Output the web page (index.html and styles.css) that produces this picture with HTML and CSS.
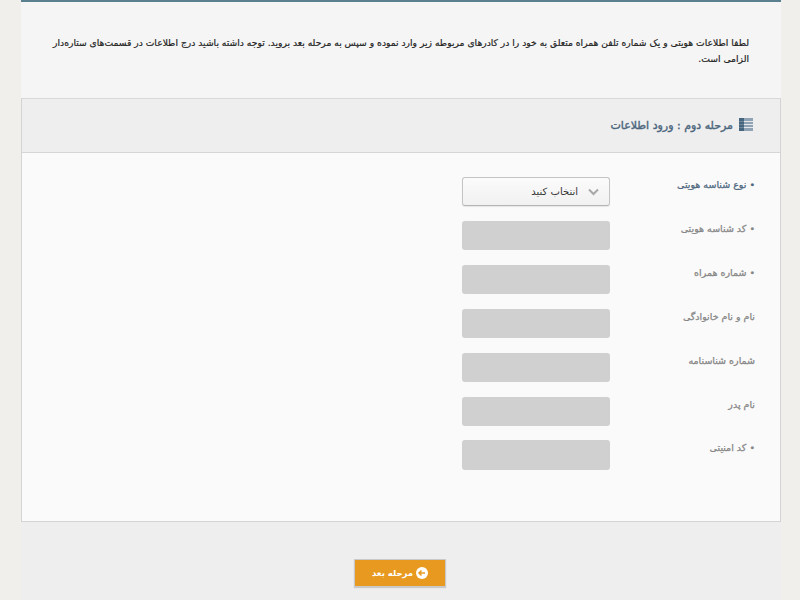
FILE: index.html
```html
<!DOCTYPE html>
<html lang="fa" dir="rtl">
<head>
<meta charset="utf-8">
<title>مرحله دوم</title>
<link rel="stylesheet" href="styles.css">
</head>
<body>
<main class="page">
  <section class="intro">
    <p>لطفا اطلاعات هویتی و یک شماره تلفن همراه متعلق به خود را در کادرهای مربوطه زیر وارد نموده و سپس به مرحله بعد بروید. توجه داشته باشید درج اطلاعات در قسمت‌های ستاره‌دار<br>الزامی است.</p>
  </section>
  <section class="panel">
    <header class="panel-head">
      <svg class="panel-icon" width="14" height="13" viewBox="0 0 14 13" aria-hidden="true">
        <rect width="14" height="13" fill="#8fa3b5"/>
        <rect width="5" height="13" fill="#46667f"/>
        <path d="M5 3.500h9M5 6.500h9M5 9.500h9" stroke="#e4e8ec" stroke-width="1"/>
        <path d="M0 3.500h5M0 6.500h5M0 9.500h5" stroke="#6f8699" stroke-width="1"/>
      </svg>
      <h2>مرحله دوم : ورود اطلاعات</h2>
    </header>
    <form class="form">
      <div class="row">
        <label class="label active">• نوع شناسه هویتی</label>
        <div class="select">
          <svg class="chev" width="11" height="8" viewBox="0 0 11 8" aria-hidden="true"><path d="M1 1.500 5.500 6 10 1.500" fill="none" stroke="#a8a8a8" stroke-width="2"/></svg>
          <span>انتخاب کنید</span>
        </div>
      </div>
      <div class="row"><label class="label">• کد شناسه هویتی</label><div class="input"></div></div>
      <div class="row"><label class="label">• شماره همراه</label><div class="input"></div></div>
      <div class="row"><label class="label">نام و نام خانوادگی</label><div class="input"></div></div>
      <div class="row"><label class="label">شماره شناسنامه</label><div class="input"></div></div>
      <div class="row"><label class="label">نام پدر</label><div class="input"></div></div>
      <div class="row captcha"><label class="label">• کد امنیتی</label><div class="input"></div></div>
    </form>
  </section>
  <footer class="foot">
    <button class="next" type="button">
      <svg width="12" height="12" viewBox="0 0 12 12" aria-hidden="true"><circle cx="6" cy="6" r="6" fill="#fff"/><path d="M9 6H3.500M5.500 3.500 3 6l2.500 2.500" fill="none" stroke="#e89a20" stroke-width="1.500"/></svg>
      <span>مرحله بعد</span>
    </button>
  </footer>
</main>
</body>
</html>
```
FILE: styles.css
```css
* { box-sizing: border-box; }
html, body { margin: 0; height: 100%; }
body {
  background: #f0efeb;
  font-family: "DejaVu Sans", "Noto Sans", sans-serif;
  overflow: hidden;
}
.page {
  width: 760px;
  height: 600px;
  margin-right: 19px;
  background: #f5f5f5;
  border-top: 2px solid #5b8090;
  display: flex;
  flex-direction: column;
}
.intro {
  height: 96px;
  padding: 33px 32px 0;
}
.intro p {
  margin: 0;
  font-size: 9.2px;
  line-height: 16px;
  color: #222;
  white-space: nowrap;
  -webkit-text-stroke: 0.2px #222;
}
.panel {
  height: 424px;
  background: #fafafa;
  border: 1px solid #d4d4d4;
  border-top-color: #d8d8d8;
  display: flex;
  flex-direction: column;
}
.panel-head {
  height: 54px;
  background: #eeeeee;
  border-bottom: 1px solid #d6d6d6;
  display: flex;
  align-items: center;
  gap: 6px;
  padding: 0 27px 0 0;
}
.panel-icon { flex: none; margin-top: -2px; }
.panel-head h2 {
  margin: 0;
  font-size: 11px;
  font-weight: 400;
  color: #4c667d;
  -webkit-text-stroke: 0.4px #4c667d;
}
.form {
  display: flex;
  flex-direction: column;
  gap: 15px;
  padding: 24px 25px 0 0;
}
.row {
  display: flex;
  align-items: flex-start;
  height: 29px;
}
.row.captcha { height: 30px; margin-top: -1px; }
.label {
  width: 145px;
  font-size: 9.500px;
  line-height: 16px;
  color: #858585;
  -webkit-text-stroke: 0.25px #858585;
}
.label.active { color: #4c667d; -webkit-text-stroke-color: #4c667d; }
.input {
  width: 148px;
  height: 100%;
  background: #d0d0d0;
  border-radius: 3px;
}
.select {
  width: 148px;
  height: 29px;
  background: linear-gradient(#fbfbfb, #f1f1f1);
  border: 1px solid #c4c4c4;
  border-bottom-color: #b4b4b4;
  border-radius: 3px;
  box-shadow: 0 1px 1px rgba(0,0,0,.08);
  display: flex;
  align-items: center;
  gap: 10px;
  padding-right: 10px;
  font-size: 10px;
  color: #333;
}
.foot {
  flex: 1;
  background: #eeeeee;
  display: flex;
  justify-content: center;
  align-items: flex-start;
  padding-top: 37px;
  padding-right: 2px;
}
.next {
  width: 92px;
  height: 28px;
  background: #e89a20;
  border: 1px solid #c9c9c9;
  box-shadow: 0 1px 1px rgba(0,0,0,.15);
  color: #fff;
  font-family: inherit;
  font-size: 8.500px;
  font-weight: 700;
  display: flex;
  align-items: center;
  justify-content: center;
  gap: 3px;
  padding: 0;
}
```
